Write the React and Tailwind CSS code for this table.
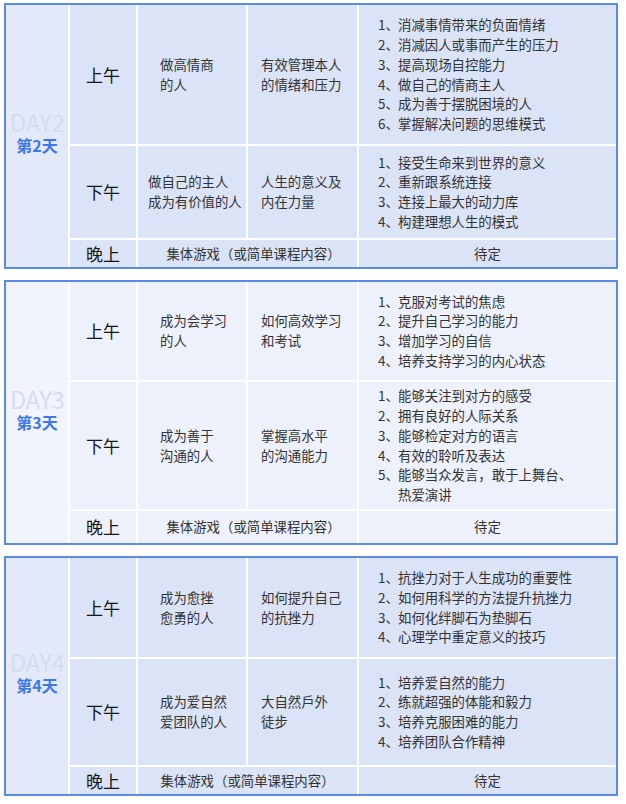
const days = [
  {
    n: 2,
    rows: 'grid-rows-[139px_92px_27px]',
    cell: 'bg-[#dbe3f7]',
    dayCell: 'bg-[#e3e9f8]',
    evePad: 'pl-[12px]',
    am: {
      topic: ['做高情商', '的人'],
      topicPad: 'pl-[22px]',
      goal: ['有效管理本人', '的情绪和压力'],
      items: ['消减事情带来的负面情绪', '消减因人或事而产生的压力', '提高现场自控能力', '做自己的情商主人', '成为善于摆脱困境的人', '掌握解决问题的思维模式'],
    },
    pm: {
      topic: ['做自己的主人', '成为有价值的人'],
      topicPad: 'pl-[10px]',
      goal: ['人生的意义及', '内在力量'],
      items: ['接受生命来到世界的意义', '重新跟系统连接', '连接上最大的动力库', '构建理想人生的模式'],
    },
  },
  {
    n: 3,
    rows: 'grid-rows-[98px_127px_32px]',
    cell: 'bg-[#edf1fb]',
    dayCell: 'bg-[#f1f4fc]',
    evePad: 'pl-[12px]',
    am: {
      topic: ['成为会学习', '的人'],
      topicPad: 'pl-[22px]',
      goal: ['如何高效学习', '和考试'],
      items: ['克服对考试的焦虑', '提升自己学习的能力', '增加学习的自信', '培养支持学习的内心状态'],
    },
    pm: {
      topic: ['成为善于', '沟通的人'],
      topicPad: 'pl-[22px]',
      goal: ['掌握高水平', '的沟通能力'],
      items: ['能够关注到对方的感受', '拥有良好的人际关系', '能够检定对方的语言', '有效的聆听及表达', ['能够当众发言，敢于上舞台、', '热爱演讲']],
    },
  },
  {
    n: 4,
    rows: 'grid-rows-[99px_106px_27px]',
    cell: 'bg-[#dbe3f7]',
    dayCell: 'bg-[#e3e9f8]',
    evePad: '',
    am: {
      topic: ['成为愈挫', '愈勇的人'],
      topicPad: 'pl-[22px]',
      goal: ['如何提升自己', '的抗挫力'],
      items: ['抗挫力对于人生成功的重要性', '如何用科学的方法提升抗挫力', '如何化绊脚石为垫脚石', '心理学中重定意义的技巧'],
    },
    pm: {
      topic: ['成为爱自然', '爱团队的人'],
      topicPad: 'pl-[22px]',
      goal: ['大自然戶外', '徒步'],
      items: ['培养爱自然的能力', '练就超强的体能和毅力', '培养克服困难的能力', '培养团队合作精神'],
    },
  },
];

function Lines({ lines }) {
  return lines.map((l, i) => <div key={i}>{l}</div>);
}

function Session({ label, s, cell }) {
  return (
    <>
      <div className={`${cell} flex items-center justify-center text-[17px] text-[#151515]`}>{label}</div>
      <div className={`${cell} flex items-center ${s.topicPad}`}>
        <div><Lines lines={s.topic} /></div>
      </div>
      <div className={`${cell} flex items-center pl-[13px]`}>
        <div><Lines lines={s.goal} /></div>
      </div>
      <div className={`${cell} flex flex-col justify-center pl-[19px]`}>
        {s.items.map((it, i) => (
          <div key={i} className="flex">
            <span className="w-[20px] shrink-0">{i + 1}、</span>
            <span>{Array.isArray(it) ? <Lines lines={it} /> : it}</span>
          </div>
        ))}
      </div>
    </>
  );
}

function DayBlock({ d }) {
  return (
    <div className={`w-[614px] border-2 border-[#5b89e6] bg-white grid grid-cols-[62px_66px_108px_109px_257px] ${d.rows} gap-[2px]`}>
      <div className={`${d.dayCell} row-span-3 flex flex-col items-center justify-center gap-[4px] pb-[6px]`}>
        <div className="text-[24px] leading-[20px] text-[#d3dcf5] tracking-[-0.5px]">DAY{d.n}</div>
        <div className="text-[16px] leading-[18px] font-semibold text-[#3d78e6]">第{d.n}天</div>
      </div>
      <Session label="上午" s={d.am} cell={d.cell} />
      <Session label="下午" s={d.pm} cell={d.cell} />
      <div className={`${d.cell} flex items-center justify-center text-[17px] text-[#151515]`}>晚上</div>
      <div className={`${d.cell} col-span-2 flex items-center justify-center ${d.evePad}`}>集体游戏（或简单课程内容）</div>
      <div className={`${d.cell} flex items-center justify-center`}>待定</div>
    </div>
  );
}

export default function App() {
  return (
    <div
      className="w-[626px] h-[804px] bg-white pl-[4px] pt-[3px] flex flex-col gap-[11px] text-[13.4px] leading-[19.7px] text-[#333]"
      style={{ fontFamily: '"Noto Sans CJK SC", "Noto Sans", sans-serif' }}
    >
      {days.map((d) => (
        <DayBlock key={d.n} d={d} />
      ))}
    </div>
  );
}
